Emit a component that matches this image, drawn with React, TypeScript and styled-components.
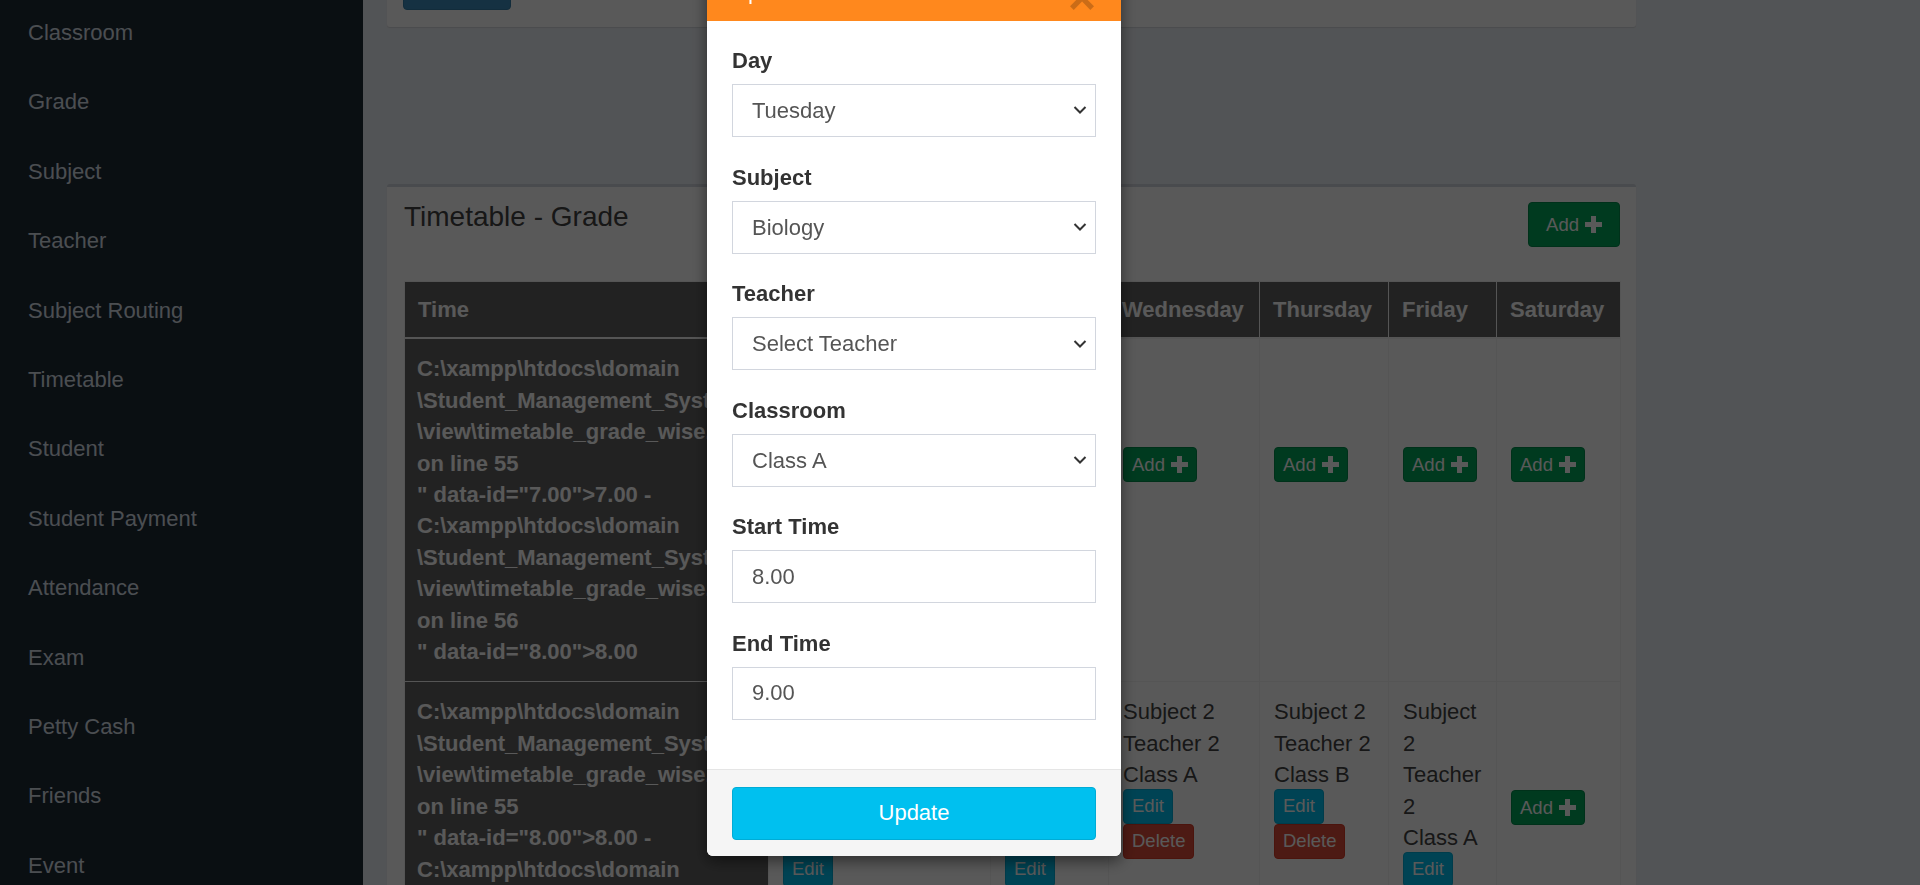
import React from "react";
import styled, { createGlobalStyle, css } from "styled-components";

const GlobalStyle = createGlobalStyle`
  html, body { margin: 0; padding: 0; height: 100%; overflow: hidden; }
  body {
    font-family: "Liberation Sans", Arial, Helvetica, sans-serif;
    font-size: 22px;
    color: #333;
    background: #ecf0f5;
  }
  #root { height: 100%; }
  *, *::before, *::after { box-sizing: border-box; }
`;

const Page = styled.div`
  display: flex;
  height: 100vh;
  overflow: hidden;
`;

const Sidebar = styled.nav`
  width: 363px;
  flex: none;
  background: #1f2b36;
`;

const NavList = styled.ul`
  list-style: none;
  margin: -2px 0 0;
  padding: 0;
`;

const NavItem = styled.li`
  padding: 19px 28px;
  line-height: 31.4px;
  font-size: 22px;
  color: #d6dfe7;
  white-space: nowrap;
`;

const Main = styled.main`
  flex: 1;
  min-width: 0;
  background: #ecf0f5;
  padding: 0 24px;
  display: flex;
  flex-direction: column;
`;

const FilterBox = styled.section`
  width: 1249px;
  height: 67px;
  flex: none;
  margin-top: -40px;
  background: #fff;
  border-radius: 0 0 3px 3px;
  box-shadow: 0 1px 1px rgba(0, 0, 0, 0.1);
  display: flex;
  align-items: flex-end;
  padding: 0 16px 17px;
`;

const SearchButton = styled.button`
  width: 108px;
  height: 44px;
  border: 1px solid #367fa9;
  background: #3c8dbc;
  border-radius: 4px;
`;

const TimetableBox = styled.section`
  width: 1249px;
  flex: none;
  margin-top: 157px;
  background: #fff;
  border-top: 3px solid #d2d6de;
  border-radius: 3px;
  box-shadow: 0 1px 1px rgba(0, 0, 0, 0.1);
  padding: 0 16px 0 17px;
`;

const BoxHeader = styled.div`
  display: flex;
  justify-content: space-between;
  align-items: flex-start;
  height: 94px;
  padding-top: 15px;
`;

const BoxTitle = styled.h3`
  margin: 0;
  font-size: 28px;
  font-weight: normal;
  line-height: 30px;
  color: #444;
`;

type Variant = "success" | "info" | "danger";

const palette: Record<Variant, { bg: string; border: string }> = {
  success: { bg: "#00a65a", border: "#008d4c" },
  info: { bg: "#00c0ef", border: "#00acd6" },
  danger: { bg: "#dd4b39", border: "#d73925" },
};

const Btn = styled.button<{ $variant: Variant; $large?: boolean }>`
  display: inline-flex;
  align-items: center;
  gap: 6px;
  font-family: inherit;
  font-size: 18.5px;
  color: #fff;
  background: ${(p) => palette[p.$variant].bg};
  border: 1px solid ${(p) => palette[p.$variant].border};
  border-radius: 4px;
  white-space: nowrap;
  ${(p) =>
    p.$large
      ? css`
          height: 45px;
          padding: 0 17px;
        `
      : css`
          height: 35px;
          padding: 0 8px;
        `}
`;

const PlusIcon = () => (
  <svg width="17" height="17" viewBox="0 0 17 17" aria-hidden="true">
    <rect x="6" y="0" width="5" height="17" fill="currentColor" />
    <rect x="0" y="6" width="17" height="5" fill="currentColor" />
  </svg>
);

const Table = styled.table`
  width: 1216px;
  border-collapse: collapse;
  table-layout: fixed;
`;

const HeadCell = styled.th`
  background: #636363;
  color: #fff;
  font-weight: bold;
  text-align: left;
  padding: 12px 13px;
  line-height: 31.4px;
  border: 1px solid #f4f4f4;
  border-bottom-width: 2px;
  white-space: nowrap;
  overflow: hidden;
`;

const TimeCell = styled.th`
  background: #636363;
  color: #fff;
  font-weight: bold;
  text-align: left;
  padding: 14px 12px;
  line-height: 31.4px;
  vertical-align: top;
  border: 1px solid #f4f4f4;
  white-space: nowrap;
  overflow: hidden;
`;

const DayCell = styled.td`
  padding: 14px 14px;
  line-height: 31.4px;
  vertical-align: top;
  color: #444;
  border: 1px solid #f4f4f4;
`;

const Line = styled.div``;

const Actions = styled.div<{ $offset?: number }>`
  display: flex;
  flex-direction: column;
  align-items: flex-start;
  gap: 0;
  margin-top: ${(p) => p.$offset ?? -2}px;
`;

const Modal = styled.div`
  position: fixed;
  top: -42px;
  left: 707px;
  width: 414px;
  background: #fff;
  border-radius: 6px;
  box-shadow: 0 5px 15px rgba(0, 0, 0, 0.5);
  overflow: hidden;
  z-index: 20;
`;

const Backdrop = styled.div`
  position: fixed;
  inset: 0;
  background: rgba(0, 0, 0, 0.65);
  z-index: 10;
`;

const ModalHeader = styled.div`
  background: #ff881d;
  color: #fff;
  padding: 18px 25px 14px;
  display: flex;
  justify-content: space-between;
  align-items: flex-start;
`;

const ModalTitle = styled.h4`
  margin: 0;
  font-size: 22px;
  font-weight: normal;
  line-height: 31px;
`;

const CloseButton = styled.button`
  border: 0;
  background: transparent;
  padding: 0;
  margin-top: 12px;
  height: 19px;
  font-family: inherit;
  font-size: 48px;
  font-weight: bold;
  line-height: 19px;
  color: #000;
  opacity: 0.2;
  overflow: visible;
`;

const ModalBody = styled.div`
  padding: 24px 25px 24px;
`;

const FormGroup = styled.div`
  margin-bottom: 24.7px;
`;

const Label = styled.label`
  display: block;
  font-weight: bold;
  font-size: 22px;
  line-height: 31.4px;
  margin-bottom: 7.5px;
  color: #333;
`;

const SelectWrap = styled.div`
  position: relative;
`;

const fieldStyle = css`
  display: block;
  width: 100%;
  height: 53px;
  border: 1px solid #d2d6de;
  border-radius: 0;
  padding: 0 40px 0 19px;
  font-family: inherit;
  font-size: 22px;
  color: #555;
  background: #fff;
  outline: none;
`;

const Select = styled.select`
  ${fieldStyle}
  appearance: none;
  -webkit-appearance: none;
`;

const Input = styled.input`
  ${fieldStyle}
`;

const Chevron = styled.svg`
  position: absolute;
  right: 9px;
  top: 50%;
  transform: translateY(-50%);
  pointer-events: none;
`;

const ModalFooter = styled.div`
  background: #f5f5f5;
  border-top: 1px solid #e5e5e5;
  padding: 17px 25px 16px;
`;

const UpdateButton = styled.button`
  width: 100%;
  height: 53px;
  background: #00c0ef;
  border: 1px solid #00acd6;
  border-radius: 4px;
  color: #fff;
  font-family: inherit;
  font-size: 22px;
`;

const navItems = [
  "Classroom",
  "Grade",
  "Subject",
  "Teacher",
  "Subject Routing",
  "Timetable",
  "Student",
  "Student Payment",
  "Attendance",
  "Exam",
  "Petty Cash",
  "Friends",
  "Event",
];

const days = ["Monday", "Tuesday", "Wednesday", "Thursday", "Friday", "Saturday"];
const colWidths = [364, 222, 118, 151, 129, 108, 124];

const noticeLines = (from: string, to: string, lineA: number, lineB: number) => [
  "C:\\xampp\\htdocs\\domain",
  "\\Student_Management_System",
  "\\view\\timetable_grade_wise.php",
  `on line ${lineA}`,
  `" data-id="${from}">${from} -`,
  "C:\\xampp\\htdocs\\domain",
  "\\Student_Management_System",
  "\\view\\timetable_grade_wise.php",
  `on line ${lineB}`,
  `" data-id="${to}">${to}`,
];

type Slot = { lines: string[] } | null;

const rows: { time: string[]; slots: Slot[] }[] = [
  {
    time: noticeLines("7.00", "8.00", 55, 56),
    slots: [null, null, null, null, null, null],
  },
  {
    time: noticeLines("8.00", "9.00", 55, 56),
    slots: [
      { lines: ["Information &", "Communication", "Technology", "Teacher 1", "Class A"] },
      { lines: ["Subject 2", "Teacher 2", "Class A"] },
      { lines: ["Subject 2", "Teacher 2", "Class A"] },
      { lines: ["Subject 2", "Teacher 2", "Class B"] },
      { lines: ["Subject 2", "Teacher 2", "Class A"] },
      null,
    ],
  },
];

const AddBtn = ({ large }: { large?: boolean }) => (
  <Btn $variant="success" $large={large}>
    Add <PlusIcon />
  </Btn>
);

const Field = ({ label, children }: { label: string; children: React.ReactNode }) => (
  <FormGroup>
    <Label>{label}</Label>
    {children}
  </FormGroup>
);

const ChevronIcon = () => (
  <Chevron width="14" height="9" viewBox="0 0 14 9" aria-hidden="true">
    <polyline points="1.5,1.5 7,7 12.5,1.5" fill="none" stroke="#333" strokeWidth="2" />
  </Chevron>
);

const SelectField = ({ label, value, options }: { label: string; value: string; options: string[] }) => (
  <Field label={label}>
    <SelectWrap>
      <Select defaultValue={value}>
        {options.map((o) => (
          <option key={o}>{o}</option>
        ))}
      </Select>
      <ChevronIcon />
    </SelectWrap>
  </Field>
);

export default function App() {
  return (
    <>
      <GlobalStyle />
      <Page>
        <Sidebar>
          <NavList>
            {navItems.map((n) => (
              <NavItem key={n}>{n}</NavItem>
            ))}
          </NavList>
        </Sidebar>
        <Main>
          <FilterBox>
            <SearchButton aria-label="Search" />
          </FilterBox>
          <TimetableBox>
            <BoxHeader>
              <BoxTitle>Timetable - Grade</BoxTitle>
              <AddBtn large />
            </BoxHeader>
            <Table>
              <colgroup>
                {colWidths.map((w, i) => (
                  <col key={i} style={{ width: w }} />
                ))}
              </colgroup>
              <thead>
                <tr>
                  <HeadCell>Time</HeadCell>
                  {days.map((d) => (
                    <HeadCell key={d}>{d}</HeadCell>
                  ))}
                </tr>
              </thead>
              <tbody>
                {rows.map((r, ri) => (
                  <tr key={ri}>
                    <TimeCell>
                      {r.time.map((l, i) => (
                        <Line key={i}>{l}</Line>
                      ))}
                    </TimeCell>
                    {r.slots.map((s, si) => (
                      <DayCell key={si}>
                        {s ? (
                          <>
                            {s.lines.map((l, i) => (
                              <Line key={i}>{l}</Line>
                            ))}
                            <Actions>
                              <Btn $variant="info">Edit</Btn>
                              <Btn $variant="danger">Delete</Btn>
                            </Actions>
                          </>
                        ) : (
                          <Actions $offset={94}>
                            <AddBtn />
                          </Actions>
                        )}
                      </DayCell>
                    ))}
                  </tr>
                ))}
              </tbody>
            </Table>
          </TimetableBox>
        </Main>
      </Page>
      <Backdrop />
      <Modal role="dialog">
        <ModalHeader>
          <ModalTitle>Update Timetable</ModalTitle>
          <CloseButton aria-label="Close">×</CloseButton>
        </ModalHeader>
        <ModalBody>
          <SelectField label="Day" value="Tuesday" options={days} />
          <SelectField
            label="Subject"
            value="Biology"
            options={["Select Subject", "Biology", "Chemistry", "Physics", "Subject 2"]}
          />
          <SelectField
            label="Teacher"
            value="Select Teacher"
            options={["Select Teacher", "Teacher 1", "Teacher 2"]}
          />
          <SelectField label="Classroom" value="Class A" options={["Class A", "Class B"]} />
          <Field label="Start Time">
            <Input defaultValue="8.00" />
          </Field>
          <Field label="End Time">
            <Input defaultValue="9.00" />
          </Field>
        </ModalBody>
        <ModalFooter>
          <UpdateButton>Update</UpdateButton>
        </ModalFooter>
      </Modal>
    </>
  );
}
